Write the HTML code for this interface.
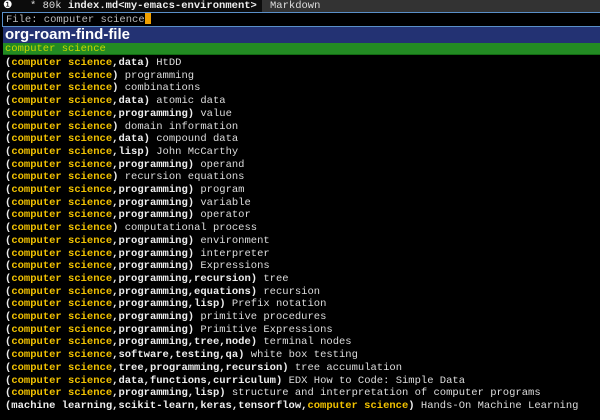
<!DOCTYPE html>
<html><head><style>
body{margin:0;width:600px;height:420px;background:#000;overflow:hidden;font-family:"Liberation Mono","DejaVu Sans Mono",monospace;font-size:10.5px;color:#ddd}
.ml{position:absolute;left:0;top:0;width:600px;height:12px;background:#333;line-height:12px;white-space:pre}
.ml .a{position:absolute;left:0;top:0;width:262px;height:12px;background:#0c0c0c}
.ml span{position:absolute;top:0}
.inp{position:absolute;left:2px;top:12px;width:598px;height:13px;border-top:1px solid #5a8fc8;border-bottom:1px solid #5a8fc8;border-left:1px solid #5a8fc8;line-height:13px;color:#bbb;white-space:pre;box-sizing:content-box;padding-left:3px}
.cur{display:inline-block;width:6px;height:11px;background:#f0a000;vertical-align:-2px}
.hd{position:absolute;left:3px;top:27px;width:597px;height:16px;background:#233273;color:#fff;font-family:"Liberation Sans",sans-serif;font-weight:bold;font-size:15px;line-height:16px;padding-left:2px;box-sizing:border-box}
.sel{position:absolute;left:3px;top:43px;width:597px;height:12px;background:#238b23;color:#c8d800;line-height:12px;padding-left:2px;box-sizing:border-box;border-bottom:1px solid #136b13}
.list{position:absolute;left:5px;top:57px;line-height:12.7px;white-space:pre}
b{color:#f2c200}
.k{font-weight:bold;color:#eee}
</style></head><body>
<div class="ml"><div class="a"></div><span style="left:3px;color:#fff">❶</span><span style="left:30px">* 80k <span class="k" style="position:static">index.md&lt;my-emacs-environment&gt;</span></span><span style="left:270px">Markdown</span></div>
<div class="inp">File: computer science<span class="cur"></span></div>
<div class="hd">org-roam-find-file</div>
<div class="sel">computer science</div>
<div class="list"><span class="k">(<b>computer science</b>,data)</span> HtDD
<span class="k">(<b>computer science</b>)</span> programming
<span class="k">(<b>computer science</b>)</span> combinations
<span class="k">(<b>computer science</b>,data)</span> atomic data
<span class="k">(<b>computer science</b>,programming)</span> value
<span class="k">(<b>computer science</b>)</span> domain information
<span class="k">(<b>computer science</b>,data)</span> compound data
<span class="k">(<b>computer science</b>,lisp)</span> John McCarthy
<span class="k">(<b>computer science</b>,programming)</span> operand
<span class="k">(<b>computer science</b>)</span> recursion equations
<span class="k">(<b>computer science</b>,programming)</span> program
<span class="k">(<b>computer science</b>,programming)</span> variable
<span class="k">(<b>computer science</b>,programming)</span> operator
<span class="k">(<b>computer science</b>)</span> computational process
<span class="k">(<b>computer science</b>,programming)</span> environment
<span class="k">(<b>computer science</b>,programming)</span> interpreter
<span class="k">(<b>computer science</b>,programming)</span> Expressions
<span class="k">(<b>computer science</b>,programming,recursion)</span> tree
<span class="k">(<b>computer science</b>,programming,equations)</span> recursion
<span class="k">(<b>computer science</b>,programming,lisp)</span> Prefix notation
<span class="k">(<b>computer science</b>,programming)</span> primitive procedures
<span class="k">(<b>computer science</b>,programming)</span> Primitive Expressions
<span class="k">(<b>computer science</b>,programming,tree,node)</span> terminal nodes
<span class="k">(<b>computer science</b>,software,testing,qa)</span> white box testing
<span class="k">(<b>computer science</b>,tree,programming,recursion)</span> tree accumulation
<span class="k">(<b>computer science</b>,data,functions,curriculum)</span> EDX How to Code: Simple Data
<span class="k">(<b>computer science</b>,programming,lisp)</span> structure and interpretation of computer programs
<span class="k">(machine learning,scikit-learn,keras,tensorflow,<b>computer science</b>)</span> Hands-On Machine Learning</div>
</body></html>
